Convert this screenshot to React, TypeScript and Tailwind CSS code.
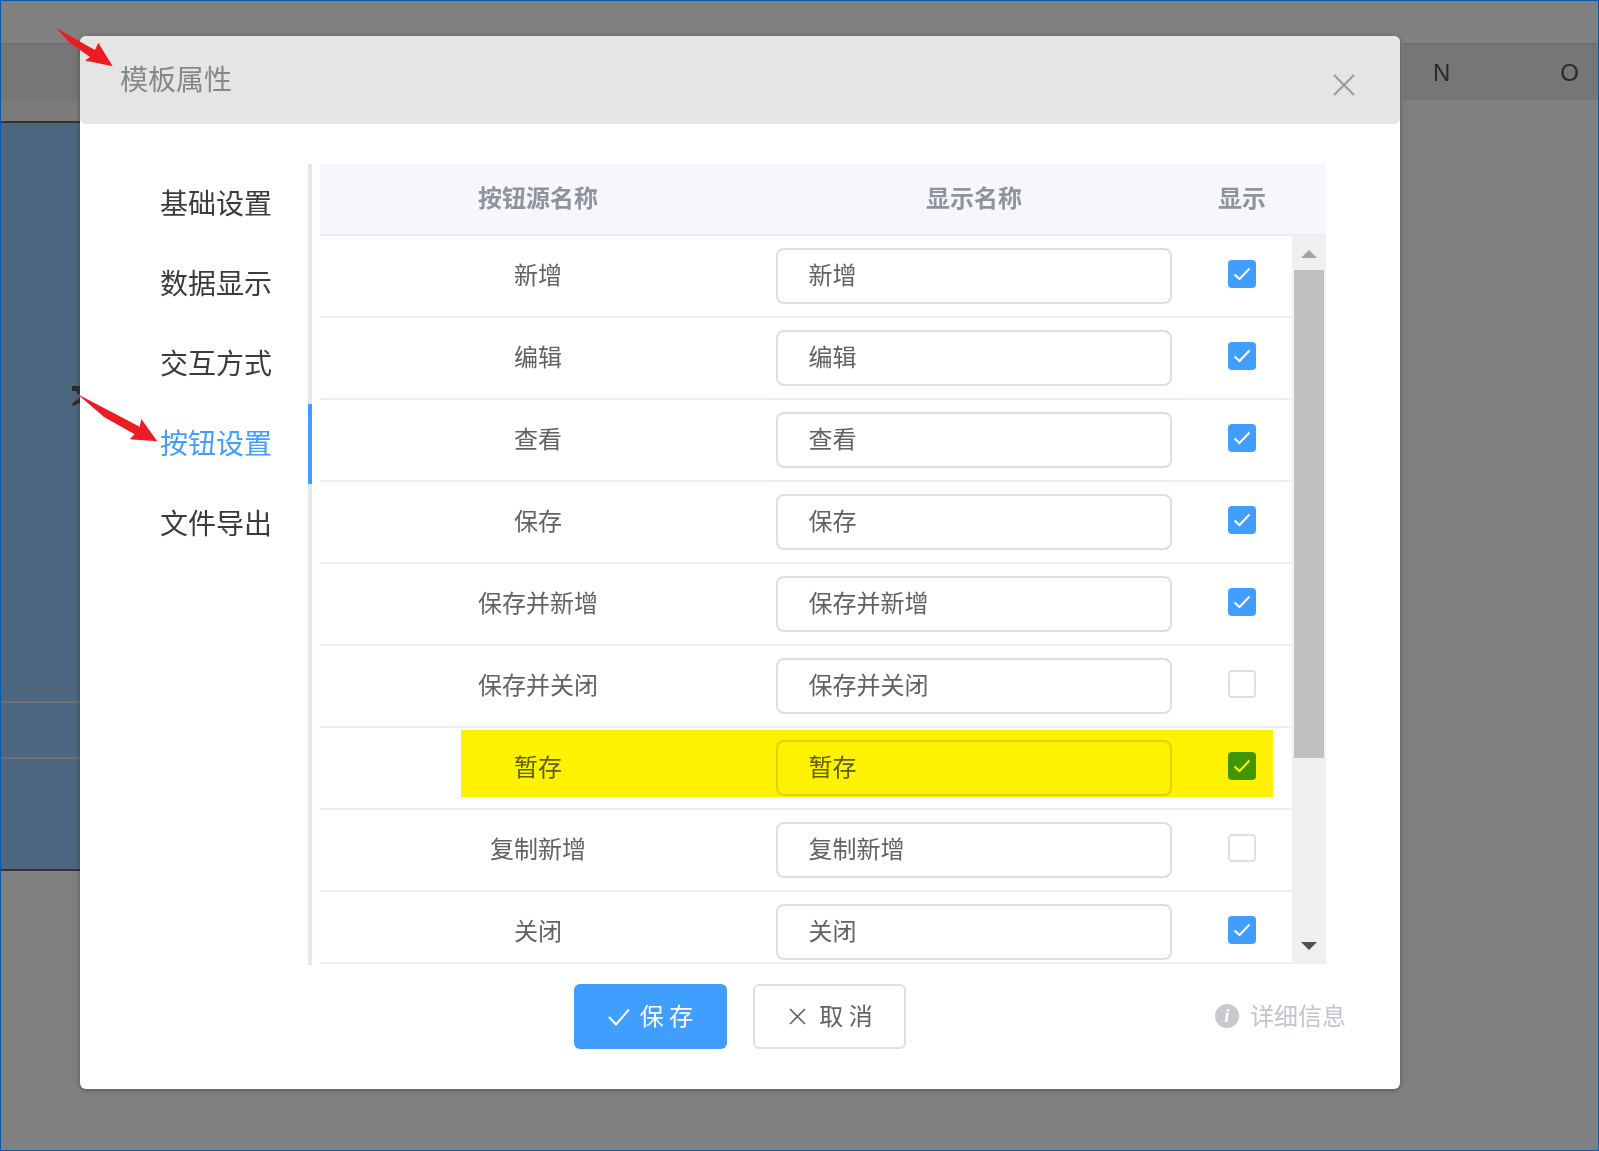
import React from 'react';

const CJK = '"Noto Sans CJK SC", "Liberation Sans", sans-serif';

const tabs = ['基础设置', '数据显示', '交互方式', '按钮设置', '文件导出'];

const rows = [
  { name: '新增', show: true },
  { name: '编辑', show: true },
  { name: '查看', show: true },
  { name: '保存', show: true },
  { name: '保存并新增', show: true },
  { name: '保存并关闭', show: false },
  { name: '暂存', show: true },
  { name: '复制新增', show: false },
  { name: '关闭', show: true },
];

const CheckBox = ({ checked }: { checked: boolean }) => (
  <div
    className={`w-[28px] h-[28px] rounded-[4px] flex items-center justify-center -mt-[4px] ${
      checked ? 'bg-[#409eff]' : 'bg-white border-2 border-[#dcdfe6]'
    }`}
  >
    {checked && (
      <svg width="18" height="14" viewBox="0 0 18 14" fill="none">
        <path d="M1.5 7.5L6.5 12L16.5 1.5" stroke="white" strokeWidth="2" />
      </svg>
    )}
  </div>
);

const TableRow = ({ name, show }: { name: string; show: boolean }) => (
  <div className="grid grid-cols-[436px_436px_100px] h-[82px] shrink-0 border-b-2 border-[#ebeef5] items-center text-[24px] text-[#606266]">
    <div className="text-center pb-[4px]">{name}</div>
    <div className="px-[20px]">
      <div className="h-[56px] rounded-[8px] border-2 border-[#dcdfe6] flex items-center pl-[30.5px] pb-[4px] bg-white">{name}</div>
    </div>
    <div className="flex justify-center">
      <CheckBox checked={show} />
    </div>
  </div>
);

export default function App() {
  return (
    <div
      className="relative w-[1599px] h-[1151px] bg-[#808080] border border-[#0a5aa8] overflow-hidden flex justify-between"
      style={{ fontFamily: CJK }}
    >
      {/* page behind the dimmed overlay */}
      <div className="w-[79px] flex flex-col">
        <div className="h-[42px] shrink-0" />
        <div className="h-[57px] shrink-0 bg-[#767676] border-t-2 border-[#707070]" />
        <div className="h-[21px] shrink-0 bg-[#7b7b7b]" />
        <div className="h-[2px] shrink-0 bg-[#333333]" />
        <div className="h-[580px] shrink-0 bg-[#4d667f] border-b-2 border-[#6e7075]" />
        <div className="h-[56px] shrink-0 bg-[#4d667f] border-b-2 border-[#6e7075]" />
        <div className="h-[110px] shrink-0 bg-[#4d667f]" />
        <div className="h-[2px] shrink-0 bg-[#333333]" />
      </div>
      <div className="w-[195px] flex flex-col">
        <div className="h-[42px] shrink-0" />
        <div
          className="h-[57px] shrink-0 bg-[#767676] border-t-2 border-[#707070] flex items-center justify-between pl-[30px] pr-[19px] text-[24px] text-[#2a2a2a]"
          style={{ fontFamily: '"Liberation Sans", sans-serif' }}
        >
          <span>N</span>
          <span>O</span>
        </div>
      </div>

      {/* modal */}
      <div className="absolute left-[79px] top-[35px] w-[1320px] h-[1053px] bg-white rounded-[6px] shadow-[0_1px_5px_rgba(0,0,0,0.35)] flex flex-col">
        <div className="h-[88px] shrink-0 bg-[#e5e5e5] rounded-[6px] flex items-center justify-between pl-[40px] pr-[45px]">
          <span className="text-[28px] text-[#85878c] pb-[4px]">模板属性</span>
          <svg className="mt-[10px]" width="22" height="22" viewBox="0 0 22 22" fill="none">
            <path d="M1 1L21 21M21 1L1 21" stroke="#9a9b9e" strokeWidth="2" />
          </svg>
        </div>

        <div className="flex pt-[40px] shrink-0">
          {/* tabs */}
          <div className="w-[232px] h-[801px] border-r-4 border-[#e4e7ed] relative shrink-0">
            {tabs.map((t, i) => (
              <div
                key={t}
                className={`h-[80px] flex items-center justify-end pr-[36px] pb-[4px] text-[28px] ${
                  i === 3 ? 'text-[#409eff]' : 'text-[#3a3b3e]'
                }`}
              >
                {t}
              </div>
            ))}
            <div className="absolute right-[-4px] top-[240px] w-[4px] h-[80px] bg-[#409eff]" />
          </div>

          {/* table */}
          <div className="ml-[8px] w-[1006px] h-[800px] flex flex-col">
            <div className="h-[72px] shrink-0 bg-[#f5f7fa] border-b-2 border-[#ebeef5] grid grid-cols-[436px_436px_100px] items-center text-[24px] font-semibold text-[#909399]">
              <div className="text-center pb-[4px]">按钮源名称</div>
              <div className="text-center pb-[4px]">显示名称</div>
              <div className="text-center pb-[4px]">显示</div>
            </div>
            <div className="h-[728px] border-b-2 border-[#ebeef5] flex overflow-hidden">
              <div className="w-[972px] flex flex-col overflow-hidden">
                {rows.map((r) => (
                  <TableRow key={r.name} name={r.name} show={r.show} />
                ))}
              </div>
              <div className="w-[34px] bg-[#f0f0f0] flex flex-col items-center">
                <svg className="mt-[14px] shrink-0" width="16" height="8" viewBox="0 0 16 8">
                  <path d="M8 0L16 8H0Z" fill="#a3a3a3" />
                </svg>
                <div className="w-[30px] h-[488px] mt-[12px] bg-[#c1c1c1] shrink-0" />
                <svg className="mt-[184px] shrink-0" width="16" height="8" viewBox="0 0 16 8">
                  <path d="M0 0H16L8 8Z" fill="#505050" />
                </svg>
              </div>
            </div>
          </div>
        </div>

        {/* footer */}
        <div className="grid grid-cols-[1fr_auto_1fr] items-center mt-[19px]">
          <div />
          <div className="flex gap-[26px]">
            <div className="w-[153px] h-[65px] rounded-[6px] bg-[#409eff] text-white text-[24px] flex items-center justify-center gap-[10px]">
              <svg width="22" height="18" viewBox="0 0 22 18" fill="none">
                <path d="M1 9L8 16.5L21 1.5" stroke="white" strokeWidth="2" />
              </svg>
              <span className="pb-[4px]">保 存</span>
            </div>
            <div className="w-[153px] h-[65px] rounded-[6px] bg-white border-2 border-[#dcdfe6] text-[#606266] text-[24px] flex items-center justify-center gap-[13px] pl-[3px]">
              <svg width="17" height="17" viewBox="0 0 17 17" fill="none">
                <path d="M1 1L16 16M16 1L1 16" stroke="#606266" strokeWidth="1.6" />
              </svg>
              <span className="pb-[4px]">取 消</span>
            </div>
          </div>
          <div className="flex justify-end items-center pr-[54px] gap-[11px]">
            <div
              className="w-[24px] h-[24px] rounded-full bg-[#c8c9cc] text-white text-[19px] font-bold italic flex items-center justify-center leading-none -mt-[2px]"
              style={{ fontFamily: '"Liberation Serif", serif' }}
            >
              i
            </div>
            <span className="text-[24px] text-[#c0c4cc] pb-[4px]">详细信息</span>
          </div>
        </div>
      </div>

      {/* yellow highlighter mark from the annotation */}
      <div className="absolute left-[460px] top-[729px] w-[812px] h-[67px] bg-[#fff200] mix-blend-multiply" />

      {/* red annotation arrows */}
      <svg className="absolute left-[54px] top-[26px]" width="62" height="44" viewBox="55 27 62 44">
        <polygon points="56,28 95,50 98.3,42.7 112.7,66.3 85,60.5 90,57 70,43" fill="#ed1c24" />
      </svg>
      <svg className="absolute left-[70px] top-[383px]" width="90" height="60" viewBox="71 384 90 60">
        <path d="M72 386H80V393L78 395L76 391H72ZM80 398L75 401L72 404L73 406L80 403Z" fill="#2b2b2b" />
        <polygon points="77.3,394 139.7,426.7 141.3,419 157.3,441.3 129.7,439.3 134.7,434.3 104,417" fill="#ed1c24" />
      </svg>
    </div>
  );
}
